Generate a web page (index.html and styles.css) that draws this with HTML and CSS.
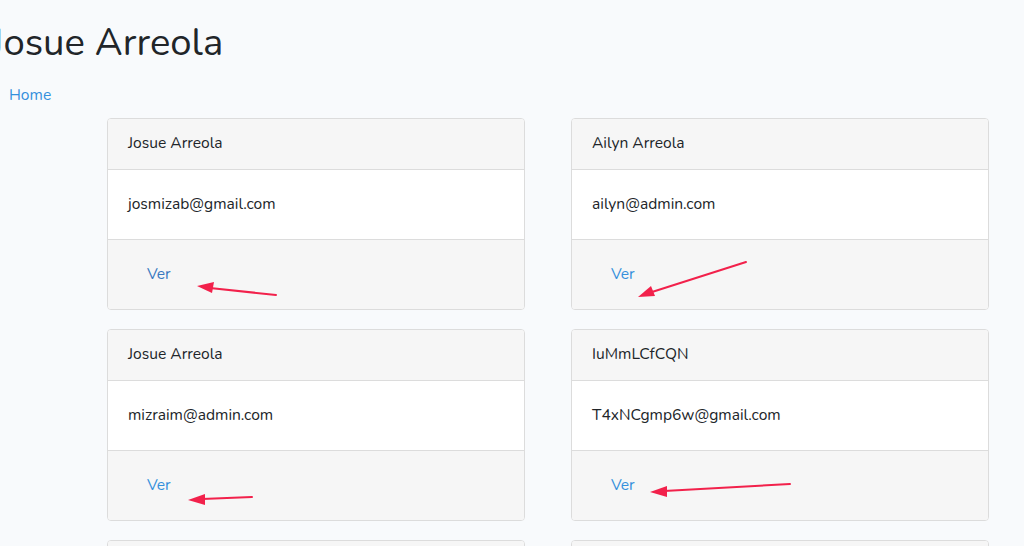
FILE: index.html
```html
<!DOCTYPE html>
<html>
<head>
<meta charset="UTF-8">
<title>Usuarios</title>
<link rel="stylesheet" href="styles.css">
</head>
<body>

   <div class="top">
      <h1 class="title">Josue Arreola</h1>
      <a href="#" class="home">Home</a>
   </div>

   <div class="cards">

      <div class="card">
         <div class="card-header">Josue Arreola</div>
         <div class="card-body">josmizab@gmail.com</div>
         <div class="card-footer"><a href="#" class="ver visited">Ver</a></div>
      </div>

      <div class="card">
         <div class="card-header">Ailyn Arreola</div>
         <div class="card-body">ailyn@admin.com</div>
         <div class="card-footer"><a href="#" class="ver">Ver</a></div>
      </div>

      <div class="card">
         <div class="card-header">Josue Arreola</div>
         <div class="card-body">mizraim@admin.com</div>
         <div class="card-footer"><a href="#" class="ver">Ver</a></div>
      </div>

      <div class="card">
         <div class="card-header">IuMmLCfCQN</div>
         <div class="card-body">T4xNCgmp6w@gmail.com</div>
         <div class="card-footer"><a href="#" class="ver">Ver</a></div>
      </div>

      <div class="card">
         <div class="card-header">&nbsp;</div>
         <div class="card-body">&nbsp;</div>
      </div>

      <div class="card">
         <div class="card-header">&nbsp;</div>
         <div class="card-body">&nbsp;</div>
      </div>

   </div>

   <!-- red arrows drawn over the screenshot -->
   <svg class="arrows" width="1024" height="546" viewBox="0 0 1024 546">
      <g stroke="#f2214b" stroke-width="2" fill="#f2214b" stroke-linecap="round">
         <line x1="276" y1="295" x2="210" y2="288" />
         <polygon points="197,286 214,282 212,293" stroke="none" />

         <line x1="746" y1="262" x2="652" y2="292" />
         <polygon points="638,297 651,286 655,296" stroke="none" />

         <line x1="252" y1="497" x2="202" y2="499" />
         <polygon points="188,500 205,494 205,505" stroke="none" />

         <line x1="790" y1="484" x2="664" y2="491" />
         <polygon points="650,492 667,486 667,497" stroke="none" />
      </g>
   </svg>

</body>
</html>
```

FILE: styles.css
```css
body {
   margin: 0;
   background-color: #f8fafc;
   font-family: Nunito, "Open Sans", sans-serif;
   font-size: 15.6px;
   line-height: 1.6;
   color: #212529;
   overflow: hidden;
   position: relative;
}

.top {
   padding: 0 0 0 9px;
}

.title {
   margin: 0 0 0 -18px;
   padding-top: 20px;
   font-size: 38.3px;
   font-weight: 400;
   line-height: 1.2;
   height: 57px;
}

.home {
   display: block;
   color: #3490dc;
   text-decoration: none;
   margin-top: 6px;
   height: 35px;
}

.cards {
   display: grid;
   grid-template-columns: 418px 418px;
   column-gap: 46px;
   row-gap: 19px;
   margin-left: 107px;
}

.card {
   background-color: #fff;
   border: 1px solid #dcdcdc;
   border-radius: 4px;
   overflow: hidden;
}

.card-header {
   background-color: #f6f6f6;
   border-bottom: 1px solid #dcdcdc;
   padding: 12px 20px 13px;
}

.card-body {
   padding: 22px 20px 22px;
}

.card-footer {
   background-color: #f6f6f6;
   border-top: 1px solid #dcdcdc;
   padding: 22px 20px 22px 39px;
}

.ver {
   color: #3490dc;
   text-decoration: none;
}

.ver.visited {
   color: #3979c0;
}

.arrows {
   position: absolute;
   top: 0;
   left: 0;
}
```
